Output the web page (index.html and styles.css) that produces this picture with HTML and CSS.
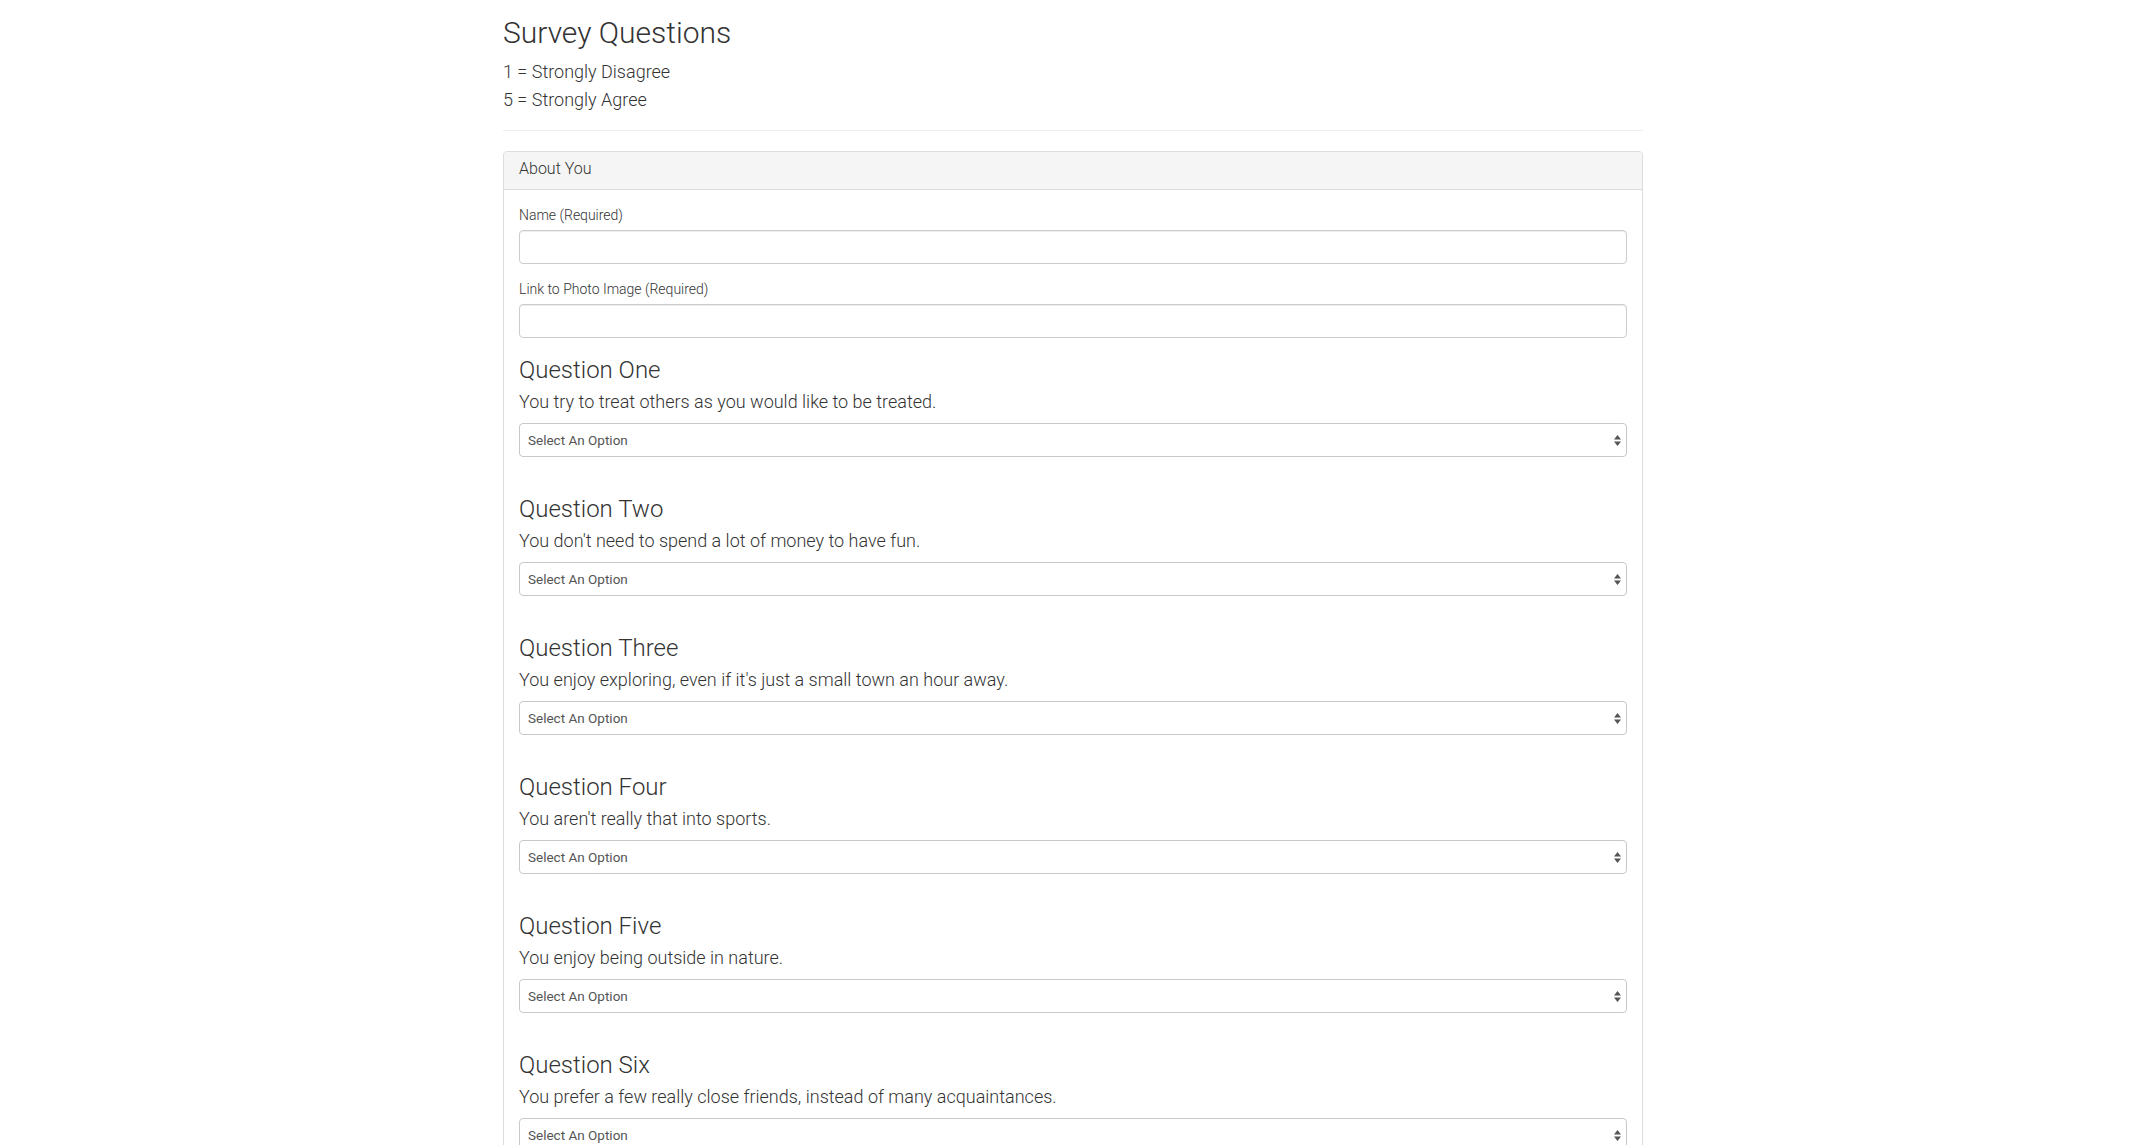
FILE: index.html
```html
<!DOCTYPE html>
<html lang="en">
<head>
<meta charset="utf-8">
<title>Survey Questions</title>
<link rel="stylesheet" href="styles.css">
</head>
<body>
<div class="container">
  <h2 class="page-title">Survey Questions</h2>
  <div class="scale">
    <div class="scale-line">1 = Strongly Disagree</div>
    <div class="scale-line">5 = Strongly Agree</div>
  </div>
  <hr class="divider">
  <div class="panel">
    <div class="panel-heading">About You</div>
    <div class="panel-body">
      <div class="form-group">
        <label class="field-label" for="name">Name (Required)</label>
        <input class="form-control" id="name" type="text">
      </div>
      <div class="form-group">
        <label class="field-label" for="photo">Link to Photo Image (Required)</label>
        <input class="form-control" id="photo" type="text">
      </div>

      <div class="question">
        <h3 class="q-title">Question One</h3>
        <p class="q-text">You try to treat others as you would like to be treated.</p>
        <select class="q-select"><option>Select An Option</option><option>1</option><option>2</option><option>3</option><option>4</option><option>5</option></select>
      </div>
      <div class="question">
        <h3 class="q-title">Question Two</h3>
        <p class="q-text">You don't need to spend a lot of money to have fun.</p>
        <select class="q-select"><option>Select An Option</option><option>1</option><option>2</option><option>3</option><option>4</option><option>5</option></select>
      </div>
      <div class="question">
        <h3 class="q-title">Question Three</h3>
        <p class="q-text">You enjoy exploring, even if it's just a small town an hour away.</p>
        <select class="q-select"><option>Select An Option</option><option>1</option><option>2</option><option>3</option><option>4</option><option>5</option></select>
      </div>
      <div class="question">
        <h3 class="q-title">Question Four</h3>
        <p class="q-text">You aren't really that into sports.</p>
        <select class="q-select"><option>Select An Option</option><option>1</option><option>2</option><option>3</option><option>4</option><option>5</option></select>
      </div>
      <div class="question">
        <h3 class="q-title">Question Five</h3>
        <p class="q-text">You enjoy being outside in nature.</p>
        <select class="q-select"><option>Select An Option</option><option>1</option><option>2</option><option>3</option><option>4</option><option>5</option></select>
      </div>
      <div class="question">
        <h3 class="q-title">Question Six</h3>
        <p class="q-text">You prefer a few really close friends, instead of many acquaintances.</p>
        <select class="q-select"><option>Select An Option</option><option>1</option><option>2</option><option>3</option><option>4</option><option>5</option></select>
      </div>
    </div>
  </div>
</div>
</body>
</html>
```

FILE: styles.css
```css
html {
  scrollbar-width: none;
}
html::-webkit-scrollbar,
body::-webkit-scrollbar {
  width: 0;
  height: 0;
}
body {
  margin: 0;
  background: #fff;
  color: #333;
  font-family: Roboto, "Helvetica Neue", Arial, sans-serif;
  font-size: 14px;
  font-weight: 300;
  line-height: 1.42857;
}
.container {
  width: 1140px;
  margin: 0 auto;
}
.page-title {
  margin: 16px 0 9px;
  font-size: 30px;
  font-weight: 300;
  line-height: 33px;
}
.scale-line {
  font-size: 18px;
  font-weight: 300;
  line-height: 28px;
}
.divider {
  margin: 16px 0 20px;
  border: 0;
  border-top: 1px solid #eee;
  height: 0;
}
.panel {
  border: 1px solid #ddd;
  border-radius: 4px;
  background: #fff;
  box-shadow: 0 1px 1px rgba(0,0,0,.05);
}
.panel-heading {
  background: #f5f5f5;
  border-bottom: 1px solid #ddd;
  border-radius: 3px 3px 0 0;
  padding: 8px 15px 12px;
  font-size: 16px;
  font-weight: 300;
  line-height: 17px;
  color: #333;
}
.panel-body {
  padding: 15px;
}
.form-group {
  display: flex;
  flex-direction: column;
  margin-bottom: 15px;
}
.field-label {
  font-size: 14px;
  font-weight: 300;
  line-height: 20px;
  margin-bottom: 5px;
}
.form-control {
  box-sizing: border-box;
  height: 34px;
  width: 100%;
  margin: 0;
  padding: 6px 12px;
  border: 1px solid #ccc;
  border-radius: 4px;
  box-shadow: inset 0 1px 1px rgba(0,0,0,.075);
  font-family: inherit;
  font-size: 14px;
  color: #555;
  background: #fff;
}
.question {
  display: flex;
  flex-direction: column;
  margin-top: 39px;
}
.form-group + .question {
  margin-top: 19px;
}
.q-title {
  margin: 0 0 8px;
  font-size: 24px;
  font-weight: 300;
  line-height: 26px;
}
.q-text {
  margin: 0 0 10px;
  font-size: 18px;
  font-weight: 300;
  line-height: 22px;
}
.q-select {
  box-sizing: border-box;
  -webkit-appearance: none;
  appearance: none;
  height: 34px;
  width: 100%;
  margin: 0;
  padding: 0 20px 0 8px;
  border: 1px solid #c8c8c8;
  border-radius: 4px;
  font-family: Roboto, "Helvetica Neue", Arial, sans-serif;
  font-size: 13.5px;
  font-weight: 400;
  color: #555;
  background-color: #fff;
  background-image: url("data:image/svg+xml;utf8,<svg xmlns='http://www.w3.org/2000/svg' width='7' height='11' viewBox='0 0 7 11'><path d='M3.5 0 L7 4.5 H0 Z M0 6.5 H7 L3.5 11 Z' fill='%23555'/></svg>");
  background-repeat: no-repeat;
  background-position: right 5px center;
}
```
